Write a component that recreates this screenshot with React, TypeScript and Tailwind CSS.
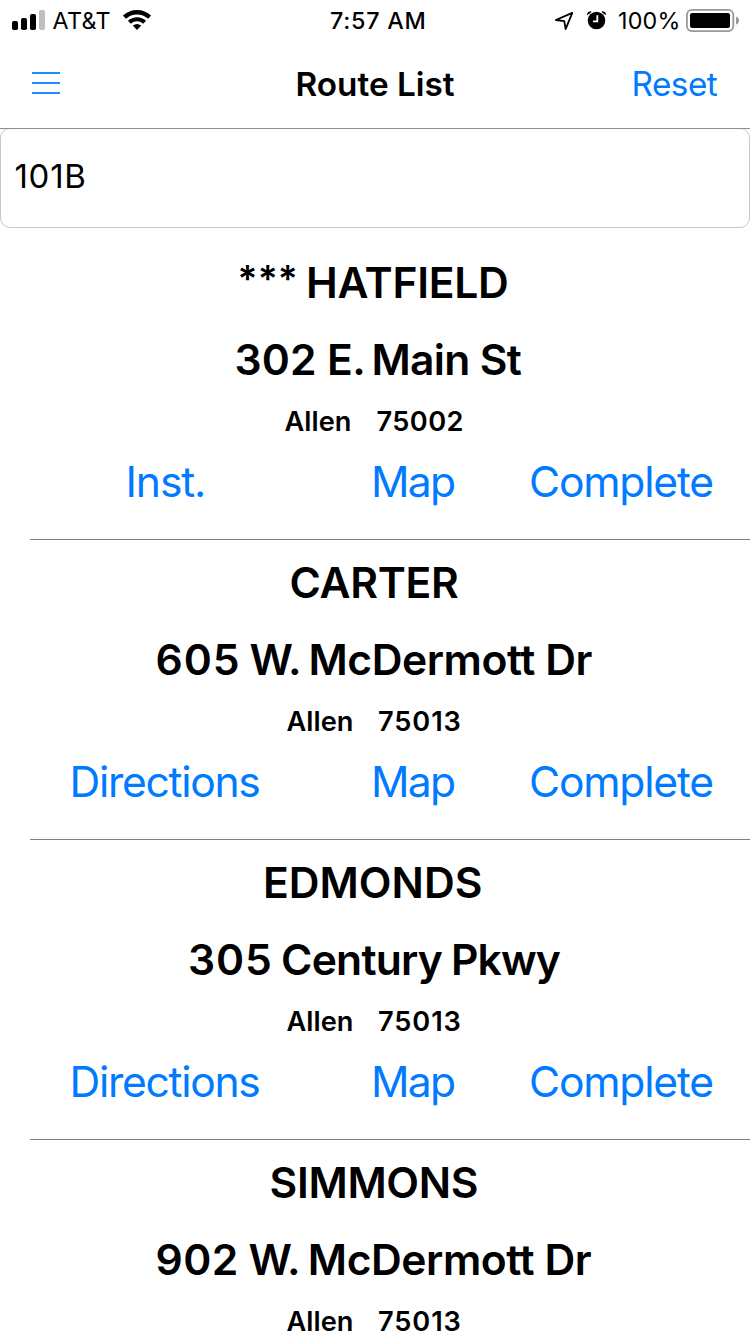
type Word = { text: string; className: string };

type Stop = {
  name: Word[];
  address: Word[];
  city: Word[];
  first?: Word;
};

const allen75013: Word[] = [
  { text: "Allen", className: "ml-[286.5px] w-[91.5px] tracking-[0.05px]" },
  { text: "75013", className: "tracking-[0.9px]" },
];

const directions: Word = { text: "Directions", className: "ml-[69.5px] w-[301.5px] tracking-[-1.3px]" };

const stops: Stop[] = [
  {
    name: [
      { text: "***", className: "ml-[237.5px] w-[68.5px] text-[37px] leading-[69px] tracking-[0.2px]" },
      { text: "HATFIELD", className: "tracking-[-0.25px]" },
    ],
    address: [
      { text: "302", className: "ml-[234.5px] w-[92.5px] tracking-[0.2px]" },
      { text: "E.", className: "w-[44.5px] tracking-[-0.6px]" },
      { text: "Main St", className: "tracking-[-0.7px]" },
    ],
    city: [
      { text: "Allen", className: "ml-[284.5px] w-[92px] tracking-[0.05px]" },
      { text: "75002", className: "tracking-[0.41px]" },
    ],
    first: { text: "Inst.", className: "ml-[125.5px] w-[245.5px] tracking-[-1.1px]" },
  },
  {
    name: [{ text: "CARTER", className: "ml-[289.5px] tracking-[-0.3px]" }],
    address: [
      { text: "605", className: "ml-[155.5px] w-[94px] tracking-[0.9px]" },
      { text: "W.", className: "w-[59px] tracking-[-0.8px]" },
      { text: "McDermott Dr", className: "tracking-[-0.45px]" },
    ],
    city: allen75013,
    first: directions,
  },
  {
    name: [{ text: "EDMONDS", className: "ml-[263px]" }],
    address: [
      { text: "305", className: "ml-[188px] w-[93px] tracking-[0.9px]" },
      { text: "Century", className: "w-[170px] tracking-[-0.75px]" },
      { text: "Pkwy", className: "tracking-[-0.9px]" },
    ],
    city: allen75013,
    first: directions,
  },
  {
    name: [{ text: "SIMMONS", className: "ml-[269.5px] tracking-[-0.3px]" }],
    address: [
      { text: "902", className: "ml-[155.5px] w-[93px] tracking-[0.4px]" },
      { text: "W.", className: "w-[59.3px] tracking-[-0.8px]" },
      { text: "McDermott Dr", className: "tracking-[-0.45px]" },
    ],
    city: allen75013,
  },
];

function Words({ words }: { words: Word[] }) {
  return (
    <>
      {words.map((w) => (
        <span key={w.text} className={`block shrink-0 whitespace-nowrap ${w.className}`}>
          {w.text}
        </span>
      ))}
    </>
  );
}

function StatusBar() {
  return (
    <div className="flex h-10 items-start text-[23.3px] leading-[41px]">
      <svg className="ml-3 h-10 w-[40.5px] shrink-0" viewBox="12 0 40.5 40">
        <rect x="12" y="21" width="6" height="9" rx="1.8" />
        <rect x="21" y="18" width="6" height="12" rx="1.8" />
        <rect x="30" y="14" width="6" height="16" rx="1.8" />
        <rect x="39" y="10" width="6" height="20" rx="1.8" fill="#bfbfbf" />
      </svg>
      <span className="w-[67.5px] shrink-0 whitespace-nowrap tracking-[0.3px]">AT&amp;T</span>
      <svg className="h-10 w-[36px] shrink-0" viewBox="120 0 36 40">
        <path d="M124.4 17.2A18.4 18.4 0 0 1 149.6 17.2" fill="none" stroke="#000" strokeWidth="4.4" />
        <path d="M129.4 22.3A11 11 0 0 1 144.6 22.3" fill="none" stroke="#000" strokeWidth="4.2" />
        <path d="M132.8 25.6Q137 22.5 141.2 25.6L137 29.9Z" />
      </svg>
      <span className="ml-[174px] w-[222px] shrink-0 whitespace-nowrap font-medium tracking-[0.75px]">
        7:57 AM
      </span>
      <svg className="h-10 w-[66px] shrink-0" viewBox="552 0 66 40">
        <path
          d="M572.3 12.9L555.8 20L564.3 21.2L565.6 29.1Z"
          fill="none"
          stroke="#000"
          strokeWidth="1.8"
          strokeLinejoin="round"
        />
        <circle cx="596.5" cy="20.5" r="8.8" />
        <path d="M587 15.2Q586.8 11.4 591.4 11.2L591 12.6Z" />
        <path d="M606 15.2Q606.2 11.4 601.6 11.2L602 12.6Z" />
        <path d="M597.3 15.2V21.4H593" fill="none" stroke="#fff" strokeWidth="1.8" />
      </svg>
      <span className="w-[66px] shrink-0 whitespace-nowrap tracking-[0.2px]">100%</span>
      <svg className="h-10 w-[60px] shrink-0" viewBox="684 0 60 40">
        <rect x="686.9" y="9.9" width="46.4" height="21.2" rx="5" fill="none" stroke="#999" strokeWidth="1.8" />
        <rect x="690" y="13" width="40" height="15" rx="2.2" />
        <path d="M736 16.5Q739 17.5 739 20.5Q739 23.5 736 24.5Z" fill="#999" />
      </svg>
    </div>
  );
}

export default function App() {
  return (
    <div className="flex h-[1334px] w-[750px] flex-col overflow-hidden bg-white font-['Inter','Liberation_Sans',sans-serif] text-black">
      <StatusBar />
      <header className="relative z-10 flex h-[89px] shrink-0 items-start border-b border-[#8e8e8e] text-[33.3px] leading-[88px]">
        <button className="ml-8 flex h-[86px] w-[263.5px] shrink-0 flex-col justify-center gap-2">
          <span className="block h-0.5 w-7 bg-[#1f8aff]" />
          <span className="block h-0.5 w-7 bg-[#1f8aff]" />
          <span className="block h-0.5 w-7 bg-[#1f8aff]" />
        </button>
        <h1 className="w-[336px] shrink-0 whitespace-nowrap font-semibold">Route List</h1>
        <button className="block shrink-0 whitespace-nowrap tracking-[-0.5px] text-[#007aff]">Reset</button>
      </header>
      <div className="-mt-px h-[100px] shrink-0 rounded-[10px] border border-[#c8c8c8] pl-[13.5px] text-[33px] leading-[95px] tracking-[0.7px]">
        101B
      </div>
      <main className="flex shrink-0 flex-col pt-3">
        {stops.map((s) => (
          <section key={s.name[0].text} className="pt-1">
            <div className="flex h-[77px] items-start text-[42.6px] font-semibold leading-[77px]">
              <Words words={s.name} />
            </div>
            <div className="flex h-[77px] items-start text-[42.6px] font-semibold leading-[77px]">
              <Words words={s.address} />
            </div>
            <div className="flex h-[46px] items-start text-[27.2px] font-semibold leading-[47px]">
              <Words words={s.city} />
            </div>
            {s.first && (
              <>
                <div className="flex h-[75px] items-start text-[42.6px] leading-[75px] text-[#007aff]">
                  <Words
                    words={[
                      s.first,
                      { text: "Map", className: "w-[158px] tracking-[-1.7px]" },
                      { text: "Complete", className: "tracking-[-1.2px]" },
                    ]}
                  />
                </div>
                <div className="ml-[30px] h-[21px] border-b border-[#808080]" />
              </>
            )}
          </section>
        ))}
      </main>
    </div>
  );
}
